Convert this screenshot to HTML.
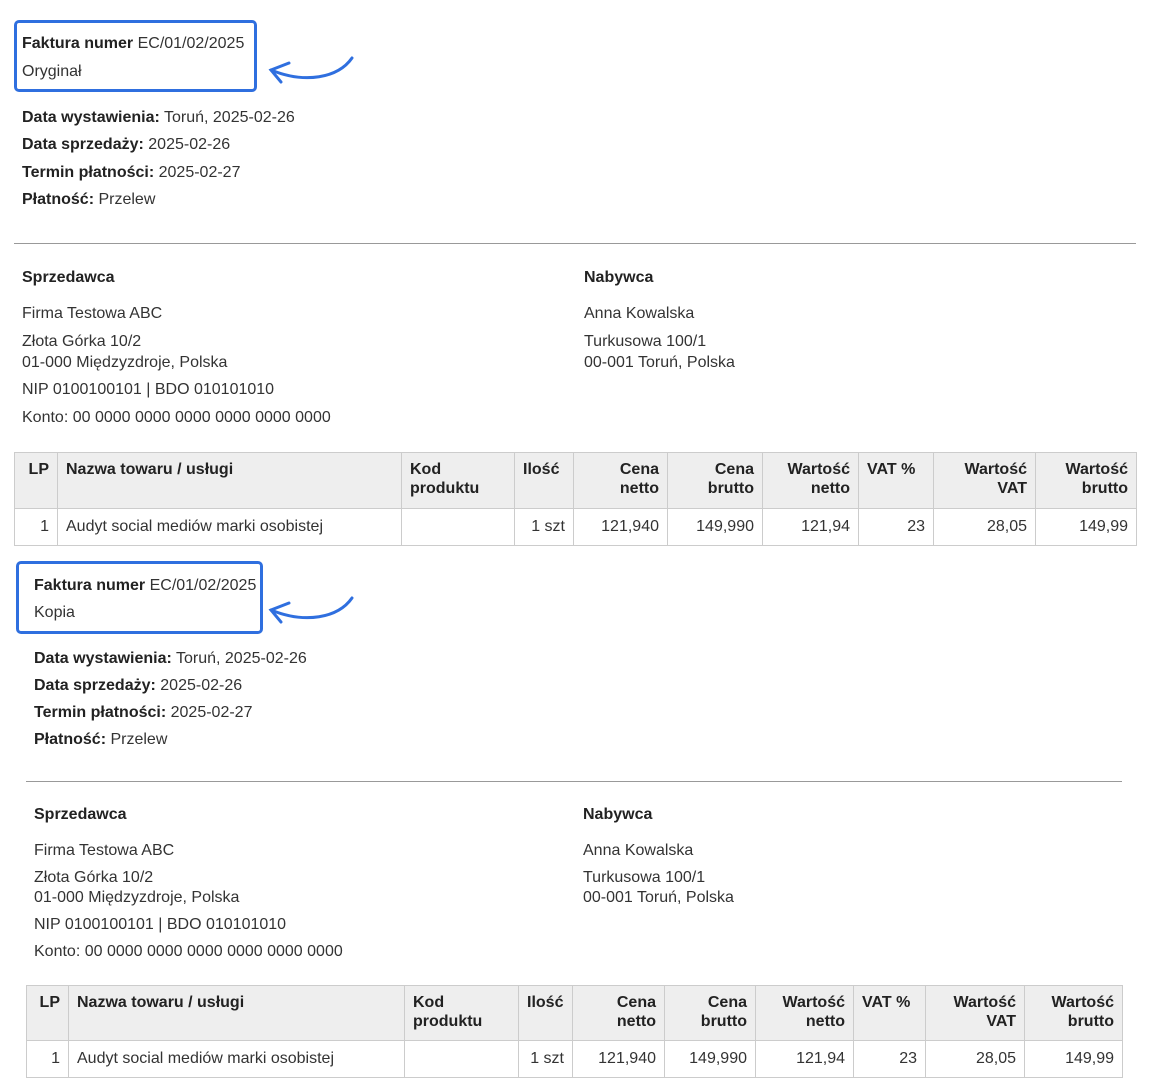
<!DOCTYPE html>
<html><head><meta charset="utf-8"><style>
body{margin:0;width:1158px;height:1080px;background:#fff;position:relative;overflow:hidden;font-family:"Liberation Sans",Arial,sans-serif;font-size:16px;color:#333}
.a{position:absolute;white-space:nowrap;line-height:18px}
b{color:#222}
.box{position:absolute;border:3px solid #2f6fdf;border-radius:5px;box-sizing:border-box}
.hr{position:absolute;height:1px;background:#999}
table{position:absolute;border-collapse:collapse;font-size:16px;color:#333;table-layout:fixed}
td,th{border:1px solid #ccc;padding:0 8px;vertical-align:top;line-height:19px;white-space:nowrap;overflow:hidden}
th{background:#eee;color:#222;text-align:right;font-weight:bold;padding-top:7px}
th.l{text-align:left}
td{text-align:right;padding-top:8px}
td.l{text-align:left}
</style></head><body>

<div class="box" style="left:14px;top:20px;width:243px;height:72px"></div>
<div class="a" style="left:22px;top:35px"><b>Faktura numer</b> EC/01/02/2025</div>
<div class="a" style="left:22px;top:63px">Oryginał</div>
<svg style="position:absolute;left:260px;top:48px" width="100" height="45"><g fill="none" stroke="#2f6fdf" stroke-width="3" stroke-linecap="round"><path d="M92 10 C78 30 45 36 11 22"/><path d="M29 15 L11 22 L21 34"/></g></svg>

<div class="a" style="left:22px;top:109px"><b>Data wystawienia:</b> Toruń, 2025-02-26</div>
<div class="a" style="left:22px;top:136px"><b>Data sprzedaży:</b> 2025-02-26</div>
<div class="a" style="left:22px;top:164px"><b>Termin płatności:</b> 2025-02-27</div>
<div class="a" style="left:22px;top:191px"><b>Płatność:</b> Przelew</div>
<div class="hr" style="left:14px;top:243px;width:1122px"></div>
<div class="a" style="left:22px;top:269px"><b>Sprzedawca</b></div>
<div class="a" style="left:584px;top:269px"><b>Nabywca</b></div>
<div class="a" style="left:22px;top:305px">Firma Testowa ABC</div>
<div class="a" style="left:22px;top:333px">Złota Górka 10/2</div>
<div class="a" style="left:22px;top:354px">01-000 Międzyzdroje, Polska</div>
<div class="a" style="left:22px;top:381px">NIP 0100100101 | BDO 010101010</div>
<div class="a" style="left:22px;top:409px">Konto: 00 0000 0000 0000 0000 0000 0000</div>
<div class="a" style="left:584px;top:305px">Anna Kowalska</div>
<div class="a" style="left:584px;top:333px">Turkusowa 100/1</div>
<div class="a" style="left:584px;top:354px">00-001 Toruń, Polska</div>

<table style="left:14px;top:452px;width:1122px">
<colgroup><col style="width:43px"><col style="width:344px"><col style="width:113px"><col style="width:59px"><col style="width:94px"><col style="width:95px"><col style="width:96px"><col style="width:75px"><col style="width:102px"><col style="width:101px"></colgroup>
<tr style="height:56px"><th>LP</th><th class="l">Nazwa towaru / usługi</th><th class="l">Kod<br>produktu</th><th class="l">Ilość</th><th>Cena<br>netto</th><th>Cena<br>brutto</th><th>Wartość<br>netto</th><th class="l">VAT %</th><th>Wartość<br>VAT</th><th>Wartość<br>brutto</th></tr>
<tr style="height:37px"><td>1</td><td class="l">Audyt social mediów marki osobistej</td><td></td><td>1 szt</td><td>121,940</td><td>149,990</td><td>121,94</td><td>23</td><td>28,05</td><td>149,99</td></tr>
</table>

<div class="box" style="left:16px;top:561px;width:247px;height:73px"></div>
<div class="a" style="left:34px;top:577px"><b>Faktura numer</b> EC/01/02/2025</div>
<div class="a" style="left:34px;top:604px">Kopia</div>
<svg style="position:absolute;left:260px;top:588px" width="100" height="45"><g fill="none" stroke="#2f6fdf" stroke-width="3" stroke-linecap="round"><path d="M92 10 C78 30 45 36 11 22"/><path d="M29 15 L11 22 L21 34"/></g></svg>

<div class="a" style="left:34px;top:650px"><b>Data wystawienia:</b> Toruń, 2025-02-26</div>
<div class="a" style="left:34px;top:677px"><b>Data sprzedaży:</b> 2025-02-26</div>
<div class="a" style="left:34px;top:704px"><b>Termin płatności:</b> 2025-02-27</div>
<div class="a" style="left:34px;top:731px"><b>Płatność:</b> Przelew</div>
<div class="hr" style="left:26px;top:781px;width:1096px"></div>
<div class="a" style="left:34px;top:806px"><b>Sprzedawca</b></div>
<div class="a" style="left:583px;top:806px"><b>Nabywca</b></div>
<div class="a" style="left:34px;top:842px">Firma Testowa ABC</div>
<div class="a" style="left:34px;top:869px">Złota Górka 10/2</div>
<div class="a" style="left:34px;top:889px">01-000 Międzyzdroje, Polska</div>
<div class="a" style="left:34px;top:916px">NIP 0100100101 | BDO 010101010</div>
<div class="a" style="left:34px;top:943px">Konto: 00 0000 0000 0000 0000 0000 0000</div>
<div class="a" style="left:583px;top:842px">Anna Kowalska</div>
<div class="a" style="left:583px;top:869px">Turkusowa 100/1</div>
<div class="a" style="left:583px;top:889px">00-001 Toruń, Polska</div>

<table style="left:26px;top:985px;width:1096px">
<colgroup><col style="width:42px"><col style="width:336px"><col style="width:114px"><col style="width:54px"><col style="width:92px"><col style="width:91px"><col style="width:98px"><col style="width:72px"><col style="width:99px"><col style="width:98px"></colgroup>
<tr style="height:55px"><th>LP</th><th class="l">Nazwa towaru / usługi</th><th class="l">Kod<br>produktu</th><th class="l">Ilość</th><th>Cena<br>netto</th><th>Cena<br>brutto</th><th>Wartość<br>netto</th><th class="l">VAT %</th><th>Wartość<br>VAT</th><th>Wartość<br>brutto</th></tr>
<tr style="height:37px"><td>1</td><td class="l">Audyt social mediów marki osobistej</td><td></td><td>1 szt</td><td>121,940</td><td>149,990</td><td>121,94</td><td>23</td><td>28,05</td><td>149,99</td></tr>
</table>
</body></html>
